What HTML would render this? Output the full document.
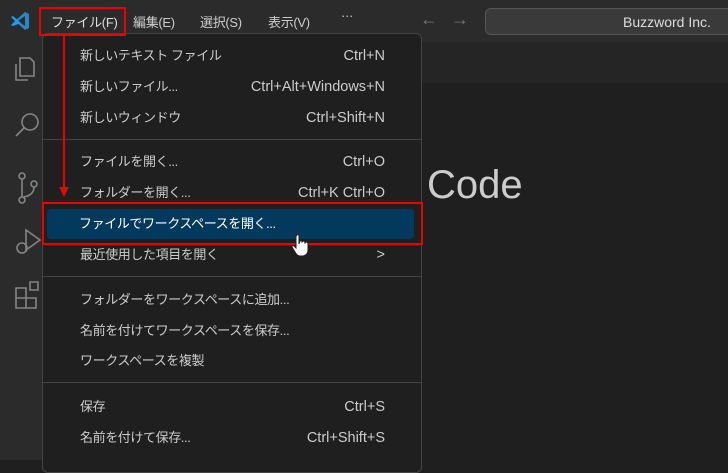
<!DOCTYPE html>
<html><head><meta charset="utf-8"><style>
*{margin:0;padding:0;box-sizing:border-box}
body{width:728px;height:460px;overflow:hidden;background:#1f1f1f;font-family:"Liberation Sans","Noto Sans CJK JP",sans-serif;color:#ccc;position:relative}
.title{position:absolute;left:0;top:0;width:728px;height:42px;background:#2b2b2b}
.act{position:absolute;left:0;top:42px;width:42px;height:418px;background:#2b2b2b}
.tabs{position:absolute;left:42px;top:42px;width:686px;height:41px;background:#252525}
.mi{position:absolute;top:12px;font-size:13px;color:#ccc;letter-spacing:-0.3px}
.cc{position:absolute;left:485px;top:8px;width:250px;height:27px;background:#3a3a3a;border:1px solid #555;border-radius:6px;font-size:14px;color:#ddd;padding:5px 0 0 137px}
.menu{position:absolute;left:42px;top:33px;width:380px;height:440px;background:#1f1f1f;border:1px solid #454545;border-radius:6px}
.it{position:absolute;left:37px;width:305px;font-size:13px;color:#ccc;line-height:20px;letter-spacing:-0.4px}
.it span{position:absolute;right:0;top:0;font-size:14.5px;letter-spacing:0}
.sep{position:absolute;left:0;width:378px;height:1px;background:#454545}
.hl{position:absolute;left:47px;top:209px;width:367px;height:30px;background:#04395e;border-radius:4px}
.red{position:absolute;border:2px solid #e00;}
</style></head><body>
<div class="title"></div>
<div class="act"></div>
<div class="tabs"></div>
<svg style="position:absolute;left:9px;top:10px" width="22" height="22" viewBox="0 0 22 22"><path d="M16 2 L20 4 V18 L16 20 L6 11 Z" fill="#2489ca"/><path d="M16 6 V16 L9 11 Z" fill="#2b2b2b"/><path d="M2 7 L4 6 L12 13 L4 16 L2 15 L6 11Z" fill="#1f9cf0"/></svg>
<div class="mi" style="left:51px;color:#ddd">ファイル(F)</div>
<div class="mi" style="left:133px">編集(E)</div>
<div class="mi" style="left:200px">選択(S)</div>
<div class="mi" style="left:268px">表示(V)</div>
<div class="mi" style="left:341px;top:8px">···</div>
<div class="mi" style="left:420px;top:9px;color:#777;font-size:18px">←</div>
<div class="mi" style="left:451px;top:9px;color:#777;font-size:18px">→</div>
<div class="cc">Buzzword Inc.</div>
<svg style="position:absolute;left:0;top:50px" width="42" height="280" fill="none" stroke="#858585" stroke-width="1.6">
<path d="M20 8 h10 l4 4 v14 h-14z M16 14 v16 h12"/>
<circle cx="30" cy="72" r="8"/><path d="M24 78 l-8 8"/>
<circle cx="22" cy="126" r="3"/><circle cx="22" cy="150" r="3"/><circle cx="34" cy="134" r="3"/><path d="M22 129 v18 M34 137 q0 8 -10 10"/>
<path d="M26 180 l14 10 l-14 10z"/><circle cx="22" cy="198" r="5"/>
<path d="M16 238 h10 v10 h-10z M16 248 h10 v10 h-10z M26 248 h10 v10 h-10z M30 232 h8 v8 h-8z"/>
</svg>
<div style="position:absolute;left:427px;top:163px;font-size:40px;color:#ccc">Code</div>
<div class="menu">
<div class="it" style="top:12px">新しいテキスト ファイル<span>Ctrl+N</span></div>
<div class="it" style="top:43px">新しいファイル...<span>Ctrl+Alt+Windows+N</span></div>
<div class="it" style="top:74px">新しいウィンドウ<span>Ctrl+Shift+N</span></div>
<div class="sep" style="top:105px"></div>
<div class="it" style="top:118px">ファイルを開く...<span>Ctrl+O</span></div>
<div class="it" style="top:149px">フォルダーを開く...<span>Ctrl+K Ctrl+O</span></div>
<div class="it" style="top:211px">最近使用した項目を開く<span>&gt;</span></div>
<div class="sep" style="top:242px"></div>
<div class="it" style="top:256px">フォルダーをワークスペースに追加...</div>
<div class="it" style="top:287px">名前を付けてワークスペースを保存...</div>
<div class="it" style="top:317px">ワークスペースを複製</div>
<div class="sep" style="top:348px"></div>
<div class="it" style="top:363px">保存<span>Ctrl+S</span></div>
<div class="it" style="top:394px">名前を付けて保存...<span>Ctrl+Shift+S</span></div>
</div>
<div class="hl"></div>
<div class="it" style="left:79px;top:214px;color:#fff">ファイルでワークスペースを開く...</div>
<div class="red" style="left:39px;top:7px;width:87px;height:29px"></div>
<div class="red" style="left:42px;top:202px;width:381px;height:43px"></div>
<div style="position:absolute;left:63px;top:36px;width:2px;height:152px;background:#e00"></div>
<div style="position:absolute;left:59px;top:187px;width:0;height:0;border-left:5px solid transparent;border-right:5px solid transparent;border-top:10px solid #e00"></div>
<svg style="position:absolute;left:292px;top:233px" width="18" height="24" viewBox="0 0 18 24"><path d="M5 2 q2-1 2 1 v8 l1-3 q2-1 2 1 l1-1 q2 0 2 2 l1-1 q2 0 2 2 v6 q0 5-5 6 h-3 q-3 0-5-4 l-3-5 q0-2 2-1 l2 2 v-12z" fill="#fff" stroke="#222" stroke-width="1"/></svg>
</body></html>
